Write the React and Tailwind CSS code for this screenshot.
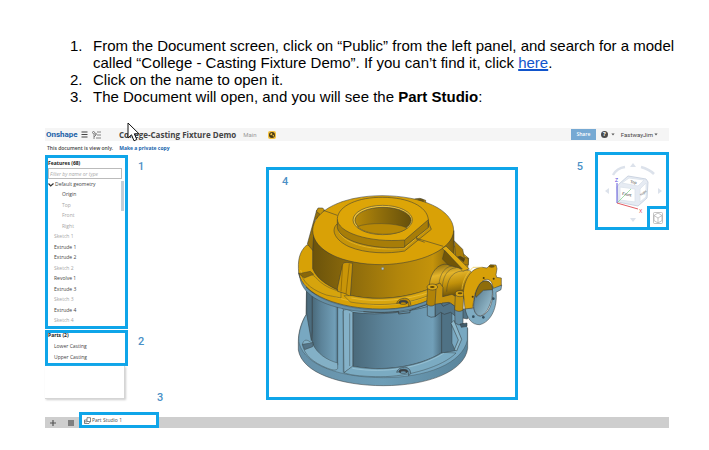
import React from "react";

const features = [
  { name: "Origin", level: 2, muted: false },
  { name: "Top", level: 2, muted: true },
  { name: "Front", level: 2, muted: true },
  { name: "Right", level: 2, muted: true },
  { name: "Sketch 1", level: 1, muted: true },
  { name: "Extrude 1", level: 1, muted: false },
  { name: "Extrude 2", level: 1, muted: false },
  { name: "Sketch 2", level: 1, muted: true },
  { name: "Revolve 1", level: 1, muted: false },
  { name: "Extrude 3", level: 1, muted: false },
  { name: "Sketch 3", level: 1, muted: true },
  { name: "Extrude 4", level: 1, muted: false },
  { name: "Sketch 4", level: 1, muted: true },
];

const parts = ["Lower Casting", "Upper Casting"];

function Callout({ className = "", children }) {
  return (
    <span className={`font-['Roboto',sans-serif] text-[11px] font-medium leading-3 text-[#4a90c6] ${className}`}>
      {children}
    </span>
  );
}

function Instructions() {
  return (
    <ol className="ml-[70px] mr-10 text-[15px] leading-[17px]">
      <li className="flex">
        <span className="w-[23px] shrink-0">1.</span>
        <p className="min-w-0 flex-1">
          <span className="block whitespace-nowrap [text-align-last:justify]">
            From the Document screen, click on “Public” from the left panel, and search for a model
          </span>
          called “College - Casting Fixture Demo”. If you can’t find it, click{" "}
          <a href="#here" className="text-[#1155cc] underline decoration-2">here</a>.
        </p>
      </li>
      <li className="flex">
        <span className="w-[23px] shrink-0">2.</span>
        <p>Click on the name to open it.</p>
      </li>
      <li className="flex">
        <span className="w-[23px] shrink-0">3.</span>
        <p>The Document will open, and you will see the <b>Part Studio</b>:</p>
      </li>
    </ol>
  );
}

function Cursor() {
  return (
    <svg className="absolute left-[82px] -top-[6px] h-[20px] w-[13px]" viewBox="0 0 13 20" aria-hidden="true">
      <path d="M1 1V16L4.5 12.8L7 18.8L9.8 17.5L7.3 11.8H12Z" fill="#fff" stroke="#111" strokeWidth="1" />
    </svg>
  );
}

function TopBar() {
  return (
    <header className="flex h-[13px] items-center bg-[#f5f5f5] text-[#444]">
      <span className="w-[36px] pl-px font-['Roboto',sans-serif] text-[8px] font-bold leading-[10px] text-[#1b62a8]">
        Onshape
      </span>
      <button aria-label="Menu" className="h-[7px] w-[7px]">
        <svg viewBox="0 0 7 7" className="block" stroke="#444" strokeWidth="1.2">
          <path d="M0.5 1H6.5M0.5 3.5H6.5M0.5 6H6.5" />
        </svg>
      </button>
      <button aria-label="Versions" className="ml-1 h-[8px] w-[9px]">
        <svg viewBox="0 0 9 8" className="block" stroke="#666" strokeWidth="0.8" fill="none">
          <path d="M5 1H9M5 4H9M4 7H9M2 3V8M2 6L4 4" />
          <circle cx="1.5" cy="1.5" r="1" />
          <circle cx="3.7" cy="3" r="0.8" />
        </svg>
      </button>
      <h1 className="ml-[18px] whitespace-nowrap text-[8px] font-bold leading-[10px]">College-Casting Fixture Demo</h1>
      <span className="ml-[7px] font-['Roboto',sans-serif] text-[6px] leading-[10px] text-[#999]">Main</span>
      <svg viewBox="0 0 8 8" className="ml-[11px] h-[8px] w-[8px]" aria-hidden="true">
        <rect width="8" height="8" rx="2" fill="#f5c341" />
        <circle cx="4" cy="4" r="3" fill="#463a18" />
        <path d="M2 3L4 1.8L4.4 3.4L3 4.4ZM4.4 4.4L6.3 3.6L5.4 6Z" fill="#f5c341" />
      </svg>
      <div className="ml-auto flex items-center pr-[11px]">
        <button className="h-[11px] w-[25px] bg-[#76a9d3] text-[5px] font-semibold leading-[11px] text-white">Share</button>
        <button className="ml-[5px] flex items-center gap-[3px]" aria-label="Help">
          <span className="h-[7px] w-[7px] rounded-full bg-[#4b4b4b] text-[6px] font-bold leading-[7px] text-white">?</span>
          <Caret />
        </button>
        <button className="ml-[6px] flex items-center gap-px font-['Roboto',sans-serif] text-[6px] leading-[10px]">
          FastwayJim
          <Caret />
        </button>
      </div>
    </header>
  );
}

function Caret() {
  return (
    <svg viewBox="0 0 4 3" className="h-[3px] w-[4px]" aria-hidden="true">
      <path d="M0.4 0.4H3.6L2 2.6Z" fill="#555" />
    </svg>
  );
}

function SidePanel() {
  return (
    <aside className="w-[83px] shrink-0 pt-[3px] text-[5px] text-[#444]">
      <section className="relative border-3 border-[#0fa5e9]">
        <h2 className="h-[10px] font-bold leading-[10px] text-[#222]">Features (68)</h2>
        <input
          aria-label="Filter by name or type"
          placeholder="Filter by name or type"
          className="block h-[11px] w-[74px] border border-[#bbb] px-px italic leading-[9px] placeholder:text-[#aaa]"
        />
        <ul className="flex h-[147px] flex-col">
          <li className="flex flex-1 items-center">
            <svg viewBox="0 0 6 5" className="mr-px h-[5px] w-[6px]" fill="none" stroke="#333" strokeWidth="1.2">
              <path d="M0.5 1.5L2.7 4L5.5 1.5" />
            </svg>
            Default geometry
          </li>
          {features.map((f) => (
            <li
              key={f.name}
              className={`flex flex-1 items-center ${f.level === 2 ? "pl-[14px]" : "pl-[6px]"} ${f.muted ? "text-[#a5a5a5]" : ""}`}
            >
              {f.name}
            </li>
          ))}
        </ul>
        <span className="absolute right-px top-[23px] h-[30px] w-[3px] bg-[#c3ced8]" />
      </section>
      <section className="mt-px border-3 border-[#0fa5e9]">
        <h2 className="h-[8px] font-bold leading-[5px] text-[#222]">Parts (2)</h2>
        <ul>
          {parts.map((p) => (
            <li key={p} className="flex h-[11px] items-center pl-[6px]">{p}</li>
          ))}
        </ul>
      </section>
      <div className="h-[33px] w-[80px] border-r border-b border-[#d5d5d5] shadow-[1px_1px_2px_#ccc]" />
    </aside>
  );
}

function Bolt({ x, y, fill }) {
  return (
    <g transform={`translate(${x} ${y})`}>
      <path d="M-20 3C-18 -8 -5 -13 8 -12C18 -10 22 -3 22 7L16 13L14 -1L-8 1Z" fill={fill} strokeWidth="1.5" />
      <ellipse rx="13" ry="6" fill="#3c4144" />
      <ellipse cy="3" rx="8" ry="3" fill={fill} stroke="none" />
    </g>
  );
}

function CastingModel() {
  return (
    <svg viewBox="-33 -30 738 681" className="block w-full" role="img" aria-label="Casting fixture model">
      <defs>
        <linearGradient id="goldSide">
          <stop offset="0" stopColor="#6b530b" />
          <stop offset="0.25" stopColor="#8a690c" />
          <stop offset="0.6" stopColor="#b1850b" />
          <stop offset="0.85" stopColor="#c4930b" />
          <stop offset="1" stopColor="#7c5d09" />
        </linearGradient>
        <linearGradient id="blueSide">
          <stop offset="0" stopColor="#4a6a7b" />
          <stop offset="0.35" stopColor="#5c8399" />
          <stop offset="0.9" stopColor="#719fb8" />
          <stop offset="1" stopColor="#4e7083" />
        </linearGradient>
        <linearGradient id="blueRim">
          <stop offset="0" stopColor="#6690a8" />
          <stop offset="0.5" stopColor="#6e9eb7" />
          <stop offset="1" stopColor="#59849b" />
        </linearGradient>
        <linearGradient id="bore">
          <stop offset="0" stopColor="#b88a09" />
          <stop offset="0.4" stopColor="#94710b" />
          <stop offset="1" stopColor="#66500b" />
        </linearGradient>
        <linearGradient id="pipe" x1="0" y1="0" x2="0.25" y2="1">
          <stop offset="0" stopColor="#806008" />
          <stop offset="0.35" stopColor="#e4b52c" />
          <stop offset="0.65" stopColor="#c0900a" />
          <stop offset="1" stopColor="#684e08" />
        </linearGradient>
        <linearGradient id="blueBore" x1="0" y1="0" x2="1" y2="1">
          <stop offset="0" stopColor="#4a6b7e" />
          <stop offset="1" stopColor="#a4cbdc" />
        </linearGradient>
      </defs>
      <g stroke="#33393a" strokeWidth="1.6" strokeLinejoin="round">
        {/* lower casting */}
        <path d="M78 404C62 430 55 460 55 485V510C66 579 182 617 310 617C445 617 554 574 563 505V445L535 418L500 300H80Z" fill="url(#blueRim)" />
        <path d="M80 330V402C62 430 52 475 58 491C76 558 185 593 310 593C440 593 548 550 562 480V442L535 418L500 320Z" fill="#78a8c1" strokeWidth="1" />
        <path d="M80 320L97 330V455L94 482L80 402Z" fill="#4c6c7e" />
        <path d="M97 335C120 358 144 368 173 376V555C130 545 103 512 97 488Z" fill="url(#blueSide)" />
        <path d="M67 492C75 470 88 485 97 490C112 522 140 540 173 549V566C168 573 155 570 138 563C103 548 73 528 67 492Z" fill="#83b0c6" strokeWidth="1.2" />
        <path d="M67 493L100 488L98 500L74 509Z" fill="#557588" strokeWidth="1.2" />
        <path d="M189 393C195 385 210 390 219 397V559L192 578Z" fill="#84b1c8" strokeWidth="1.2" />
        <path d="M219 397C300 409 400 396 485 367V518C410 563 305 575 219 559Z" fill="url(#blueSide)" />
        <path d="M192 578L217 559C315 577 418 561 489 517L528 519C489 560 382 591 302 590C260 590 213 587 192 578Z" fill="#7babc2" strokeWidth="1.2" />
        <path d="M217 565C315 582 424 563 492 519" fill="none" stroke="#a5cbdc" strokeWidth="2" />
        <path d="M485 365L516 356V490L526 512L485 519Z" fill="#4f7285" strokeWidth="1.2" />
        <path d="M513 430L522 421L545 478L530 513L523 509L535 480Z" fill="#8bb8cc" />
        <path d="M174 375L190 387V578M209 400V558" fill="none" strokeWidth="1.2" />
        <Bolt x={370} y={574} fill="#6692a9" />

        {/* upper casting flange and body */}
        <path d="M80 195C57 216 53 242 56 278C67 345 177 386 300 387C363 388 420 376 458 354L560 300L566 235L500 178Z" fill="#d7a106" />
        <path d="M56 278C65 346 180 390 302 389C366 388 420 376 458 354V365C400 393 320 403 250 395C160 388 77 357 62 304Z" fill="#668fa5" strokeWidth="1.2" />
        <path d="M62 270C76 328 180 365 284 375C340 377 400 367 450 347" fill="none" stroke="#ecc13b" strokeWidth="2" />
        <path d="M98 155V266C113 302 151 321 186 335L217 348C299 363 378 353 452 326L522 240V152Z" fill="url(#goldSide)" />
        <path d="M65 286C78 276 95 282 105 290C126 315 151 327 183 335V354L139 345C103 332 75 314 65 286Z" fill="#d6a40d" strokeWidth="1.2" />
        <path d="M82 192L110 91L119 85L128 104L104 120L98 211Z" fill="#94700a" />
        <path d="M109 94L114 84H128L136 93L121 104Z" fill="#c5940a" />
        <path d="M398 61L407 56L420 55L437 61V70L425 74Z" fill="#bd8c08" />
        <ellipse cx="421" cy="62" rx="10" ry="5" fill="#795b08" strokeWidth="1.2" />
        <path d="M98 151C99 90 192 47 306 47C425 47 520 88 521 151C520 208 423 251 307 254C186 254 99 212 98 151Z" fill="#d9a106" />
        <path d="M172 325L188 252Q190 247 201 247L218 250L211 350L196 341L173 334Z" fill="#c99508" />
        <path d="M188 252L183 334M208 251L198 343" fill="none" stroke="#805e05" strokeWidth="2" />
        <path d="M192 347L216 347C302 365 382 352 448 327L456 342C390 372 307 382 211 366Z" fill="#d8a50e" strokeWidth="1.2" />
        <path d="M214 354C302 371 385 358 449 337" fill="none" stroke="#ecc449" strokeWidth="2" />
        <path d="M250 395C300 398 335 398 356 394V402L390 398V391L450 371V383" fill="none" strokeWidth="2" />
        <Bolt x={370} y={367} fill="#b78708" />
        <path d="M56 281L91 274L101 283L73 294Z" fill="#896709" strokeWidth="1.2" />

        {/* central boss */}
        <path d="M171 132C151 151 166 181 207 200C256 221 326 222 374 213L454 148L445 126Z" fill="#c69408" />
        <path d="M176 154C192 193 280 215 374 204L446 143" fill="none" stroke="#e0b025" strokeWidth="3" />
        <path d="M172 119V143C180 183 271 208 370 203L445 143V119Z" fill="#a77d08" />
        <path d="M172 116C174 77 235 51 308 52C384 52 442 79 445 119L374 180C268 189 171 158 172 116Z" fill="#dda507" />
        <path d="M374 180V203M445 121V142" fill="none" strokeWidth="1.2" />
        <ellipse cx="308" cy="120" rx="89" ry="44" fill="#efc43a" />
        <ellipse cx="309" cy="121" rx="84" ry="39" fill="url(#bore)" />
        <path d="M232 140C260 127 347 127 382 144C354 170 262 169 232 140Z" fill="#b78806" strokeWidth="1.2" />
        <path d="M130 91L172 106M410 175L490 199M410 169V178L434 187" fill="none" />

        {/* side outlet */}
        <path d="M522 182L548 208L553 232L565 235V255L530 254Z" fill="#aa7e09" />
        <path d="M532 231L541 229L554 236L551 245Z" fill="#5b4407" />
        <path d="M448 315C452 272 480 244 509 255L569 272L579 280L562 354L495 357Z" fill="url(#pipe)" />
        <path d="M477 330C474 294 489 260 517 258M487 334C485 292 502 265 528 263M500 335C501 302 514 275 546 273" fill="none" strokeWidth="1.2" />
        <path d="M487 205L498 198L568 267L548 274Z" fill="#dda910" />
        <path d="M494 211L547 267L505 255L487 237Z" fill="#715508" strokeWidth="1.2" />
        <path d="M451 320L480 309L489 322L488 350L516 343L538 356L544 376L528 382L507 367L486 369L480 377H450Z" fill="#c5930d" />
        <path d="M464 373L483 370L489 379L511 369L532 384L573 391L562 417L528 410L512 397L493 403L482 397L465 410Z" fill="#527487" />
        <path d="M442 367L465 373V410Q453 415 442 407Z" fill="#719eb5" />
        <path d="M443 323L440 373Q452 383 465 374L468 328Z" fill="#b18308" />
        <ellipse cx="457" cy="321" rx="16" ry="9" fill="#dba713" />
        <ellipse cx="457" cy="321" rx="7" ry="3" fill="#5d4609" stroke="none" />
        <path d="M524 382L549 391V432Q536 439 525 429Z" fill="#668fa5" />
        <path d="M526 345L524 389Q537 399 549 390L551 347Z" fill="#c3930b" />
        <ellipse cx="540" cy="341" rx="14" ry="9" fill="#d7a210" />
        <ellipse cx="540" cy="340" rx="7" ry="3" fill="#60490a" stroke="none" />
        <path fillRule="evenodd" d="M555 385L578 386L637 319L665 315L663 329L648 337C653 380 634 426 599 434C576 435 561 416 555 385ZM582 366C579 387 586 409 602 408C625 405 641 367 638 334C635 310 623 300 607 305C592 313 585 342 582 366Z" fill="#7eabc2" />
        <path d="M582 365C586 327 603 300 620 303C637 306 641 334 634 361C626 390 610 411 596 407C583 402 579 384 582 365Z" fill="url(#blueBore)" />
        <path d="M586 343C594 312 606 301 620 303C634 306 638 319 637 329L610 331L588 352Z" fill="#8f6d0b" />
        <path d="M550 338C553 301 571 263 607 262L621 264L631 254L648 255L651 266L648 284L650 292L664 294V316L640 325L635 308C623 287 602 304 594 320C583 337 581 361 578 384L555 387Z" fill="#d7a009" />
        <path d="M567 275L579 262L607 262M567 275C558 286 548 304 546 328" fill="none" stroke="#efc43c" strokeWidth="2" />
        <ellipse cx="635" cy="259" rx="9" ry="4" fill="#705509" stroke="none" />
        <circle cx="611" cy="294" r="3" fill="#4b3a0c" stroke="none" />
        <circle cx="641" cy="296" r="3" fill="#4b3a0c" stroke="none" />
        <circle cx="578" cy="350" r="3" fill="#4b3a0c" stroke="none" />
        <circle cx="580" cy="410" r="4" fill="#344f5e" stroke="none" />
        <circle cx="610" cy="412" r="4" fill="#344f5e" stroke="none" />
        <circle cx="640" cy="356" r="4" fill="#344f5e" stroke="none" />
        <path d="M540 432L561 429V439L544 442Z" fill="#405b6a" />
        <circle cx="308" cy="266" r="4" fill="#abc7d4" stroke="#756b48" />
      </g>
    </svg>
  );
}

function ViewCube() {
  return (
    <div className="relative h-[78px] w-[74px] shrink-0 border-3 border-[#0fa5e9]">
      <svg viewBox="0 0 68 72" className="block h-full w-full" role="img" aria-label="View cube">
        <g fill="#dce2eb">
          <path d="M32 12L35 8L38 12ZM32 63L35 67L38 63ZM11 33L7 36L11 39ZM60 33L64 36L60 39Z" />
        </g>
        <path d="M15 20Q19 13 27 12M43 12Q51 14 56 19" fill="none" stroke="#dce2eb" strokeWidth="2.5" />
        <path d="M21 29L30 21L48 24L50 27L49 43L40 51L20 47L19 32Z" fill="#e6ebf3" stroke="#ccd5e2" />
        <path d="M24 28L31 23L46 25L40 31ZM22 32L37 34V47L22 45ZM42 34L48 28V42L42 47Z" fill="#fff" stroke="#dbe2eb" strokeWidth="0.8" />
        <path d="M19 48L33 34" stroke="#8bd796" strokeWidth="0.8" />
        <path d="M19 48V28" stroke="#6258dc" strokeWidth="1" />
        <path d="M19 48L40 54" stroke="#e35c64" strokeWidth="1" />
        <g fontFamily="Liberation Sans, sans-serif">
          <text x="17" y="27" fontSize="5" fill="#5848dc">Z</text>
          <text x="41" y="58" fontSize="5" fill="#e34551">X</text>
          <g fill="#333" fontSize="4">
            <text x="32" y="28" transform="rotate(10 32 28)">Top</text>
            <text x="24" y="40" transform="rotate(10 24 40)">Front</text>
            <text x="43" y="41" transform="rotate(-36 43 41)" fontSize="3">Right</text>
          </g>
        </g>
      </svg>
      <button
        aria-label="View options"
        className="absolute -bottom-[3px] -right-[3px] h-[24px] w-[22px] border-3 border-[#0fa5e9] bg-white"
      >
        <svg viewBox="0 0 16 18" className="block h-full w-full" fill="none" stroke="#aaa" strokeWidth="0.7">
          <rect x="3.5" y="3.5" width="9" height="11" rx="1" />
          <path d="M8 4L12 6.5V11.5L8 14L4 11.5V6.5ZM4 6.5L8 9L12 6.5M8 9V14" />
        </svg>
      </button>
    </div>
  );
}

function TabBar() {
  return (
    <footer className="mt-[5px] flex h-[11px] items-center bg-[#cecece] text-[#444]">
      <button aria-label="Add tab" className="ml-[5px] h-[6px] w-[6px]">
        <svg viewBox="0 0 6 6" className="block" stroke="#555" strokeWidth="1.2"><path d="M3 0V6M0 3H6" /></svg>
      </button>
      <button aria-label="Tab list" className="ml-3 h-[6px] w-[6px]">
        <svg viewBox="0 0 6 6" className="block" stroke="#666" strokeWidth="1.3"><path d="M0 1H6M0 3H6M0 5H6" /></svg>
      </button>
      <button className="-mt-[5px] ml-[5px] flex h-[16px] w-[80px] items-center gap-px border-3 border-[#0fa5e9] bg-white pl-[2px] text-[5px] leading-[10px]">
        <svg viewBox="0 0 7 7" className="h-[7px] w-[7px]" fill="none" stroke="#555" strokeWidth="0.7">
          <path d="M0.5 3H3V0.7H6.5V4.5L5 6.5H0.5ZM3 3V4.5H6.5M0.5 4.8H3" />
        </svg>
        Part Studio 1
      </button>
    </footer>
  );
}

export default function App() {
  return (
    <main className="min-h-screen bg-white pt-[37px] font-['Liberation_Sans',Arial,sans-serif] text-black">
      <Instructions />
      <section className="relative ml-[45px] mr-10 mt-[23px] font-['Open_Sans',sans-serif]">
        <TopBar />
        <p className="flex h-[11px] items-end gap-[6px] pl-[2px] text-[5px] font-semibold leading-[7px] text-[#444]">
          This document is view only.
          <a href="#copy" className="font-bold text-[#1765ad]">Make a private copy</a>
        </p>
        <div className="flex h-[260px] items-start">
          <SidePanel />
          <div className="grow-138 basis-0">
            <div className="flex flex-col pl-[10px] pt-[9px]">
              <Callout>1</Callout>
              <Callout className="mt-[163px]">2</Callout>
              <Callout className="mt-11 pl-[19px]">3</Callout>
            </div>
          </div>
          <div className="relative mt-[15px] h-[233px] w-[252px] shrink-0 border-3 border-[#0fa5e9]">
            <CastingModel />
            <Callout className="absolute left-[13px] top-[6px]">4</Callout>
          </div>
          <div className="grow-77 basis-0">
            <div className="pr-[12px] text-right">
              <Callout>5</Callout>
            </div>
          </div>
          <ViewCube />
        </div>
        <TabBar />
        <Cursor />
      </section>
    </main>
  );
}
